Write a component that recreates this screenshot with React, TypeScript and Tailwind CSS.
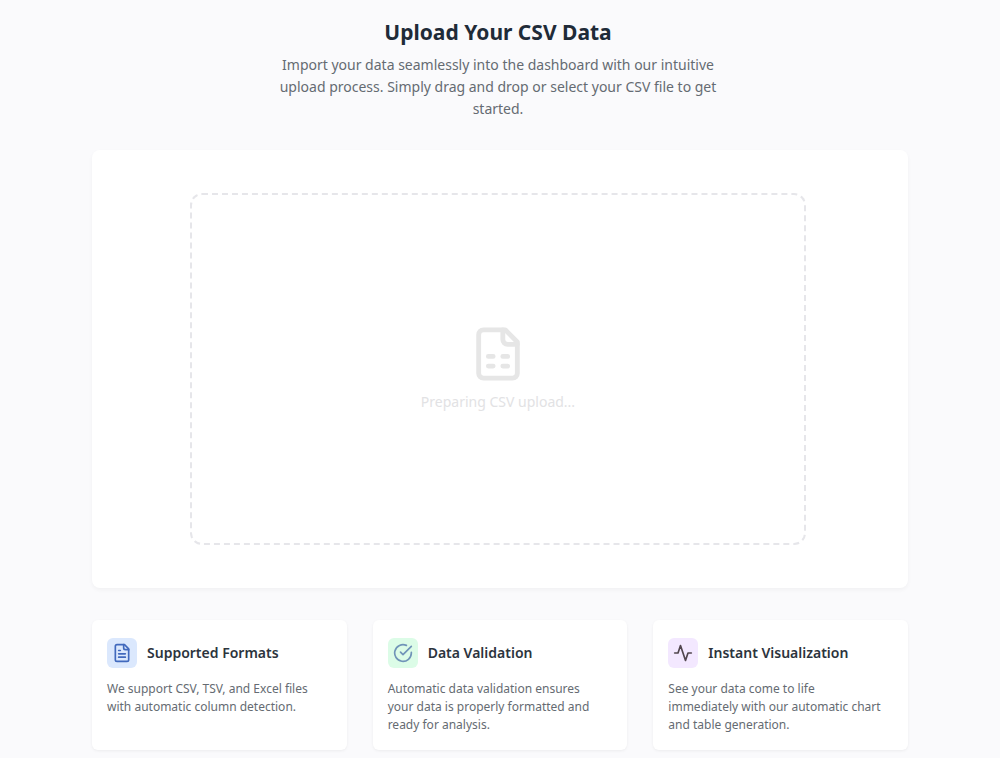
import type { ReactNode } from "react";

type Feature = {
  title: string;
  text: string;
  tile: string;
  icon: ReactNode;
};

const stroke = {
  viewBox: "0 0 24 24",
  fill: "none",
  stroke: "currentColor",
  strokeWidth: 2,
  strokeLinecap: "round",
  strokeLinejoin: "round",
  "aria-hidden": true,
} as const;

const features: Feature[] = [
  {
    title: "Supported Formats",
    text: "We support CSV, TSV, and Excel files with automatic column detection.",
    tile: "bg-[#dbe8fd] text-[#4169bd]",
    icon: (
      <svg {...stroke} className="size-5">
        <path d="M15 2H6a2 2 0 0 0-2 2v16a2 2 0 0 0 2 2h12a2 2 0 0 0 2-2V7Z" />
        <path d="M14 2v4a2 2 0 0 0 2 2h4" />
        <path d="M10 9H8M16 13H8M16 17H8" />
      </svg>
    ),
  },
  {
    title: "Data Validation",
    text: "Automatic data validation ensures your data is properly formatted and ready for analysis.",
    tile: "bg-[#dcfce7] text-[#7094b8]",
    icon: (
      <svg {...stroke} className="size-5">
        <path d="M22 11.08V12a10 10 0 1 1-5.93-9.14" />
        <path d="m9 11 3 3L22 4" />
      </svg>
    ),
  },
  {
    title: "Instant Visualization",
    text: "See your data come to life immediately with our automatic chart and table generation.",
    tile: "bg-[#f3e8ff] text-[#51464e]",
    icon: (
      <svg {...stroke} className="size-5">
        <path d="M22 12h-4l-3 9L9 3l-3 9H2" />
      </svg>
    ),
  },
];

function FeatureCard({ title, text, tile, icon }: Feature) {
  return (
    <article className="rounded-md bg-white px-[15px] pt-[18px] pb-4 shadow-[0_1px_3px_rgba(0,0,0,0.06)]">
      <div className="flex items-center gap-2.5">
        <span className={`flex size-[30px] items-center justify-center rounded-md ${tile}`}>{icon}</span>
        <h2 className="text-sm font-semibold text-[#2c343d]">{title}</h2>
      </div>
      <p className="mt-3 pr-3 text-xs leading-[18px] text-[#656b72]">{text}</p>
    </article>
  );
}

export default function App() {
  return (
    <div className="min-h-screen bg-[#fafafc] px-4 pt-5 pb-2 font-['Noto_Sans','Open_Sans',sans-serif]">
      <main className="mx-auto max-w-[816px]">
        <header className="mx-auto max-w-[450px] pr-1 text-center">
          <h1 className="text-[21px] leading-6 font-bold text-[#1f2b38]">Upload Your CSV Data</h1>
          <p className="mt-2.5 text-sm leading-[22px] text-[#656b72]">
            Import your data seamlessly into the dashboard with our intuitive upload process. Simply drag and drop or
            select your CSV file to get started.
          </p>
        </header>

        <section className="mt-[30px] rounded-lg bg-white py-[43px] pr-5 pl-4 shadow-[0_2px_4px_rgba(0,0,0,0.04)]">
          <div className="mx-auto flex h-[352px] max-w-[616px] flex-col items-center justify-center rounded-xl border-2 border-dashed border-[#e6e6ea]">
            <svg {...stroke} className="size-[58px] text-[#e6e6e6]">
              <path d="M15 2H6a2 2 0 0 0-2 2v16a2 2 0 0 0 2 2h12a2 2 0 0 0 2-2V7Z" />
              <path d="M14 2v4a2 2 0 0 0 2 2h4" />
              <path d="M8 13h2M14 13h2M8 17h2M14 17h2" />
            </svg>
            <p className="mt-2 text-sm leading-[22px] text-[#e2e2e4]">Preparing CSV upload...</p>
          </div>
        </section>

        <div className="mt-8 grid grid-cols-3 gap-[26px]">
          {features.map((feature) => (
            <FeatureCard key={feature.title} {...feature} />
          ))}
        </div>
      </main>
    </div>
  );
}
